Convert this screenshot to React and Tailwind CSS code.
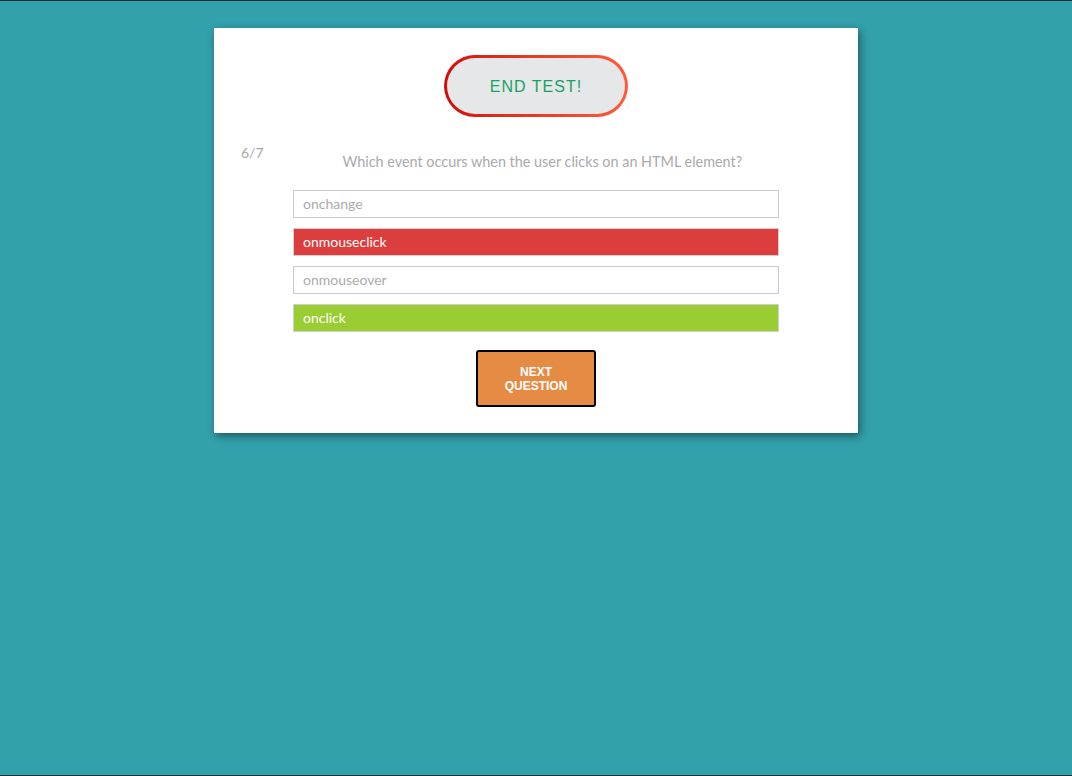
export default function App() {
  const options = [
    { label: "onchange", state: "none" },
    { label: "onmouseclick", state: "wrong" },
    { label: "onmouseover", state: "none" },
    { label: "onclick", state: "right" },
  ];
  return (
    <div className="w-[1072px] h-[776px] bg-[#32a1ab] border-t border-b border-[#2b2b2b] flex flex-col items-center" style={{ fontFamily: "Lato, 'Liberation Sans', sans-serif" }}>
      <div className="mt-[27px] w-[644px] bg-white shadow-[2px_3px_8px_rgba(0,0,0,0.45)] flex flex-col items-center pt-[27px] pb-[26px]">
        <div className="w-[184px] h-[62px] rounded-full p-[3px] bg-gradient-to-r from-[#d10a0a] to-[#ff5a3a]">
          <div className="w-full h-full rounded-full bg-[#e6e7e9] flex items-center justify-center">
            <span className="text-[16px] tracking-[1px] text-[#15a262] leading-none mt-[1px]" style={{ fontFamily: "'Liberation Sans', Arial, sans-serif" }}>END TEST!</span>
          </div>
        </div>
        <div className="w-full flex mt-[26px] pl-[27px] pr-[37px]">
          <div className="text-[14px] leading-[20px] text-[#a8a8a8]">6/7</div>
          <div className="flex-1 text-center text-[14.4px] leading-[20px] text-[#aaaaaa] mt-[9px]">Which event occurs when the user clicks on an HTML element?</div>
        </div>
        <div className="w-[486px] mt-[18px] flex flex-col gap-[10px]">
          {options.map((o) => (
            <div
              key={o.label}
              className={
                "h-[28px] border flex items-center pl-[9px] pb-[1px] text-[14px] " +
                (o.state === "wrong"
                  ? "bg-[#dc3d3d] border-[#d0d0d0] text-white"
                  : o.state === "right"
                  ? "bg-[#9acd32] border-[#d0d0d0] text-white"
                  : "bg-white border-[#cccccc] text-[#ababab]")
              }
            >
              {o.label}
            </div>
          ))}
        </div>
        <button className="mt-[18px] w-[120px] h-[57px] bg-[#e58b43] border-2 border-black rounded-[3px] text-white font-bold text-[12px] leading-[14px] flex items-center justify-center text-center" style={{ fontFamily: "'Liberation Sans', Arial, sans-serif" }}>
          NEXT<br />QUESTION
        </button>
      </div>
    </div>
  );
}
